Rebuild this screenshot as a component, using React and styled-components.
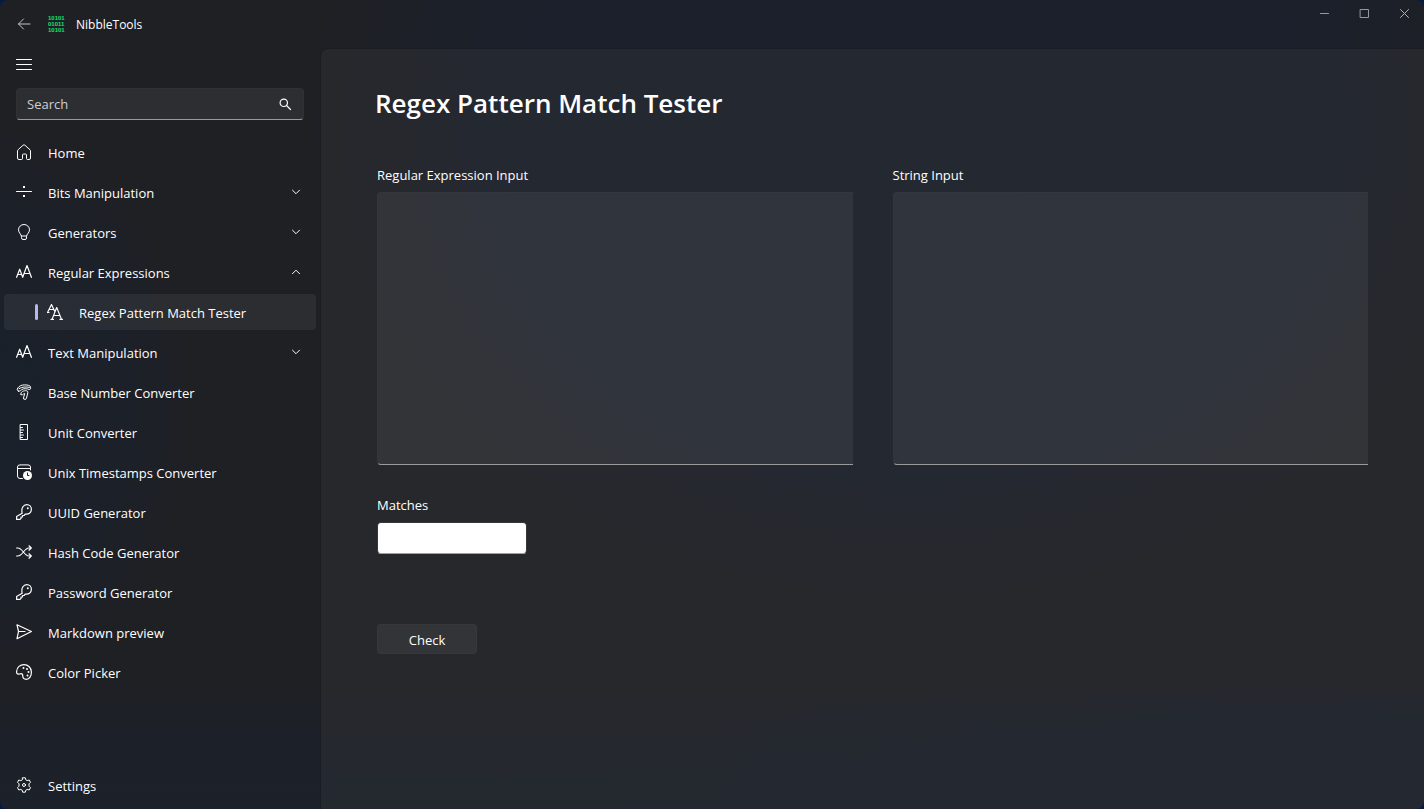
import React from "react";
import styled, { createGlobalStyle } from "styled-components";

const font = '"Open Sans", "Noto Sans", sans-serif';

const GlobalStyle = createGlobalStyle`
  *, *::before, *::after { box-sizing: border-box; }
  body {
    margin: 0;
    background: #041a44;
    color: #fff;
    font-family: ${font};
    font-size: 13px;
    line-height: 20px;
  }
  button, input, textarea { font: inherit; color: inherit; }
`;

const Window = styled.div`
  min-height: 100vh;
  display: flex;
  flex-direction: column;
  border-radius: 8px;
  overflow: hidden;
  background:
    radial-gradient(ellipse 46% 66% at 64% 16%, #1b202c 0%, #1b202c 60%, transparent 95%),
    radial-gradient(ellipse 14% 36% at 0% 50%, #1a212b 0%, #1c2029 60%, transparent 100%),
    radial-gradient(ellipse 50% 18% at 90% 100%, #1b202b 0%, #1b202b 50%, transparent 100%),
    linear-gradient(to top, #1b212a 0%, #1d2028 10%, transparent 17%),
    #1f2024;
`;

const TitleBar = styled.header`
  height: 48px;
  display: flex;
  align-items: center;
`;

const IconButton = styled.button`
  width: 48px;
  height: ${(p) => p.$height || 48}px;
  padding: 0;
  border: 0;
  background: none;
  display: flex;
  align-items: center;
  justify-content: center;
  color: ${(p) => p.$color || "#fff"};
`;

const AppName = styled.span`
  margin-left: 12px;
  padding-top: 2px;
  font-size: 12px;
`;

const WindowControls = styled.div`
  margin-left: auto;
  align-self: flex-start;
  display: flex;

  ${IconButton} {
    width: 40px;
    height: 27px;
  }
`;

const Body = styled.div`
  flex: 1;
  display: flex;
`;

const Sidebar = styled.aside`
  flex: none;
  width: 320px;
  padding-bottom: 6px;
  display: flex;
  flex-direction: column;
`;

const SearchBox = styled.label`
  height: 32px;
  margin: 8px 16px 14px;
  padding: 0 10px;
  display: flex;
  align-items: center;
  border: 1px solid #303134;
  border-bottom-color: #9a9a9b;
  border-radius: 4px;
  background: #2d2e31;
`;

const SearchInput = styled.input`
  flex: 1;
  min-width: 0;
  padding: 0;
  border: 0;
  outline: 0;
  background: none;
  &::placeholder { color: #cfcfd0; opacity: 1; }
`;

const NavList = styled.nav`
  padding: 0 4px;
  display: flex;
  flex-direction: column;
  gap: 4px;
  ${(p) => p.$bottom && "margin-top: auto;"}
`;

const NavItem = styled.button`
  height: 36px;
  padding: 0 12px 0 ${(p) => (p.$selected ? 31 : 12)}px;
  display: flex;
  align-items: center;
  border: 0;
  border-radius: 4px;
  background: ${(p) => (p.$selected ? "rgba(255, 255, 255, 0.06)" : "none")};
  text-align: left;
`;

const SelectionBar = styled.span`
  width: 3px;
  height: 16px;
  margin-right: 9px;
  border-radius: 2px;
  background: #b9b8ea;
`;

const NavLabel = styled.span`
  flex: 1;
  margin-left: 16px;
  padding-top: 2px;
`;

const Icon = styled.svg`
  flex: none;
  display: block;
  width: 16px;
  height: 16px;
  fill: none;
  stroke: currentColor;
  stroke-width: 1;
  stroke-linecap: round;
  stroke-linejoin: round;
`;

const Logo = styled.svg`
  display: block;
  width: 16px;
  height: 16px;
  overflow: visible;
  fill: #0fe070;
  font: bold 6px "Liberation Sans", sans-serif;
`;

const Panel = styled.main`
  flex: 1;
  min-width: 0;
  padding: 36px 54px;
  border: solid rgba(0, 0, 0, 0.12);
  border-width: 1px 0 0 1px;
  border-radius: 8px 0 0 0;
  background: rgba(58, 58, 62, 0.3);
  background-clip: padding-box;
`;

const Title = styled.h1`
  margin: 0;
  font-size: 26px;
  line-height: 36px;
  font-weight: 600;
`;

const Form = styled.form`
  margin: 44px 2px 0;
  display: flex;
  flex-direction: column;
  align-items: flex-start;
`;

const InputColumns = styled.div`
  align-self: stretch;
  display: grid;
  grid-template-columns: 1fr 1fr;
  gap: 40px;
  margin-bottom: 30px;
`;

const Field = styled.label`
  display: flex;
  flex-direction: column;
  gap: 7px;
`;

const TextArea = styled.textarea`
  height: 273px;
  padding: 6px 10px;
  resize: none;
  outline: 0;
  border: solid rgba(255, 255, 255, 0.01);
  border-width: 1px 0 1px 1px;
  border-bottom-color: #9a9a9b;
  border-radius: 4px 0 0 4px;
  background: rgba(255, 255, 255, 0.06);
`;

const MatchesInput = styled.input`
  width: 150px;
  height: 32px;
  padding: 0 10px;
  border: 1px solid #36373a;
  border-bottom-color: #9ba19b;
  border-radius: 4px;
  outline: 0;
  background: #fff;
  color: #111;
`;

const CheckButton = styled.button`
  width: 100px;
  height: 30px;
  margin-top: 70px;
  padding: 2px 0 0;
  border: 1px solid rgba(255, 255, 255, 0.02);
  border-radius: 4px;
  background: rgba(255, 255, 255, 0.06);
`;

const icons = {
  back: <path d="M14 8H2.500M7.500 3 2.500 8l5 5" />,
  menu: <path d="M.5 3.500h15M.5 8.500h15M.5 13.500h15" />,
  search: (
    <g strokeWidth="1.200">
      <circle cx="6.800" cy="6.800" r="3.700" />
      <path d="m9.500 9.500 4 4" />
    </g>
  ),
  home: (
    <path d="M7.200 1.100a1.200 1.200 0 0 1 1.600 0l5.200 4.700q.5.500.5 1.200V14q0 1.500-1.500 1.500h-1.500q-1 0-1-1V11q0-1-1-1h-2q-1 0-1 1v3.500q0 1-1 1H3q-1.500 0-1.500-1.500V7q0-.7.5-1.200Z" />
  ),
  divide: (
    <>
      <path d="M.5 7.500h15" />
      <path d="M7 2h2v2H7zM7 11h2v2H7z" fill="currentColor" stroke="none" />
    </>
  ),
  bulb: (
    <path d="M5.500 12.500C5.400 10 2.500 9 2.500 5.800a5.500 5.300 0 0 1 11 0c0 3.200-2.900 4.200-3 6.700v1.500q0 1.500-1.500 1.500H7q-1.500 0-1.500-1.500ZM5.500 12h5" />
  ),
  letters: (
    <path
      strokeWidth="1.200"
      d="M.6 13.300 3.700 5.200l3 8.100M1.700 10.500h4M6.700 13.300 11 1.500l4.400 11.800M8 9.500h6"
    />
  ),
  lettersOverlap: (
    <path
      strokeWidth="1.200"
      d="M.5 8.500 4.500.6l3 6.400M2 5.500h4M0 8.500h2M5 15.400 9.700 3.500l4.800 11.900M6.700 11.500h6M4 15.400h2.500M13 15.400h2.500"
    />
  ),
  base: (
    <path d="M2.500 7.200C1 6.600.8 5.300 1.800 4 3.200 2 5.500.9 8.500.9c3.300 0 5.700.6 6 1.900.3 1.500 0 2.900-1 2.700-3-.9-6-1.300-8 .3-1 .8-1.800 1.800-3 1.400ZM3 4.700C6 2.800 10 2.500 13.500 3.400M5 10.500C4.300 8.500 6.500 6.700 9.500 6.700c1.700 0 2.500.6 2.300 2l-1.300 5.500q-.3 1.200-1.500 1.200-2 0-1.500-1.500L8.700 9.500C7 9.500 6.500 12 5 10.500Z" />
  ),
  ruler: (
    <path d="M4.500.5h7v15h-7ZM4.500 3.500h2M4.500 6h3M4.500 8.500h2M4.500 11h3M4.500 13.500h2" />
  ),
  timestamp: (
    <>
      <path d="M6.500 14.500H4q-2.500 0-2.500-2.500V3Q1.500.9 4 .9h8q2.500 0 2.500 2.100v3M1.500 4.500h13" />
      <circle cx="11.500" cy="11.500" r="4.500" fill="currentColor" stroke="none" />
      <path d="M11.500 9v2.500H13" stroke="#1d2026" />
    </>
  ),
  key: (
    <>
      <path
        strokeWidth="1.200"
        d="M6.200 9.300C4.900 4.200 7.500.6 10.800.6a4.700 4.700 0 0 1 4.600 4.700c0 3.500-2.900 5.200-5.900 4.700L8 11.500H6.500V13H5v1.500l-1 .9H.6v-2.900Z"
      />
      <circle cx="11.800" cy="4.200" r="1" fill="currentColor" stroke="none" />
    </>
  ),
  shuffle: (
    <path
      strokeWidth="1.200"
      d="M.6 4h1.200c5 0 6.200 8 11.200 8h2.300M.6 12h1.200C6.800 12 8 4 13 4h2.300M13 1.800 15.300 4 13 6.200M13 9.800l2.300 2.200-2.300 2.200"
    />
  ),
  send: <path strokeWidth="1.200" d="M1 .8 15.400 7.500 1 14.700l1.500-7.200ZM2.500 7.500H9" />,
  palette: (
    <>
      <path
        strokeWidth="1.200"
        d="M.6 7.500C.8 3 4.300.6 8 .6a7.400 7.400 0 0 1 7.400 7.400c0 4-1.900 7.400-5.100 7.400-2.600 0-3.500-1.500-3.500-3.200 0-1.500-.5-2.500-1.800-2.500-1 0-1.600.5-2.600.5C1 10.200.5 9 .6 7.500Z"
      />
      <g fill="currentColor" stroke="none">
        <circle cx="7.500" cy="4" r="1" />
        <circle cx="11" cy="5" r="1" />
        <circle cx="12.500" cy="8" r="1" />
        <circle cx="11.500" cy="11.500" r="1" />
      </g>
    </>
  ),
  settings: (
    <>
      <path d="M6.700.8h2.600l.5 2 1.400.8 2-.6 1.300 2.300L13 6.800v2.400l1.500 1.500-1.300 2.300-2-.6-1.400.8-.5 2H6.700l-.5-2-1.400-.8-2 .6-1.300-2.300L3 9.200V6.800L1.500 5.300 2.800 3l2 .6 1.400-.8Z" />
      <circle cx="8" cy="8" r="1.500" />
    </>
  ),
  chevronDown: <path d="m4.500 6.200 3.500 3.500 3.500-3.500" />,
  chevronUp: <path d="m4.500 9.700 3.500-3.500 3.500 3.500" />,
  minimize: <path d="M4.500 7.500h8" />,
  maximize: <path d="M4.500 3.500h8v8h-8Z" />,
  close: <path d="m4.500 3.500 8 8M12.500 3.500l-8 8" />,
};

const Glyph = ({ name }) => (
  <Icon viewBox="0 0 16 16" aria-hidden="true">
    {icons[name]}
  </Icon>
);

const navItems = [
  { icon: "home", label: "Home" },
  { icon: "divide", label: "Bits Manipulation", chevron: "chevronDown" },
  { icon: "bulb", label: "Generators", chevron: "chevronDown" },
  { icon: "letters", label: "Regular Expressions", chevron: "chevronUp" },
  { icon: "lettersOverlap", label: "Regex Pattern Match Tester", selected: true },
  { icon: "letters", label: "Text Manipulation", chevron: "chevronDown" },
  { icon: "base", label: "Base Number Converter" },
  { icon: "ruler", label: "Unit Converter" },
  { icon: "timestamp", label: "Unix Timestamps Converter" },
  { icon: "key", label: "UUID Generator" },
  { icon: "shuffle", label: "Hash Code Generator" },
  { icon: "key", label: "Password Generator" },
  { icon: "send", label: "Markdown preview" },
  { icon: "palette", label: "Color Picker" },
];

const NavEntry = ({ icon, label, chevron, selected }) => (
  <NavItem type="button" $selected={selected} aria-current={selected ? "page" : undefined}>
    {selected && <SelectionBar />}
    <Glyph name={icon} />
    <NavLabel>{label}</NavLabel>
    {chevron && <Glyph name={chevron} />}
  </NavItem>
);

export default function App() {
  return (
    <>
      <GlobalStyle />
      <Window>
        <TitleBar>
          <IconButton type="button" aria-label="Back" $color="#c4c4c5">
            <Glyph name="back" />
          </IconButton>
          <Logo viewBox="0 0 16 16" aria-hidden="true">
            <text x="0" y="4">10101</text>
            <text x="0" y="10">01011</text>
            <text x="0" y="16">10101</text>
          </Logo>
          <AppName>NibbleTools</AppName>
          <WindowControls>
            <IconButton type="button" aria-label="Minimize" $color="#96989c">
              <Glyph name="minimize" />
            </IconButton>
            <IconButton type="button" aria-label="Maximize" $color="#96989c">
              <Glyph name="maximize" />
            </IconButton>
            <IconButton type="button" aria-label="Close" $color="#b0b1b4">
              <Glyph name="close" />
            </IconButton>
          </WindowControls>
        </TitleBar>
        <Body>
          <Sidebar>
            <IconButton type="button" aria-label="Menu" $height={32}>
              <Glyph name="menu" />
            </IconButton>
            <SearchBox>
              <SearchInput type="text" placeholder="Search" aria-label="Search" />
              <Glyph name="search" />
            </SearchBox>
            <NavList>
              {navItems.map((item) => (
                <NavEntry key={item.label} {...item} />
              ))}
            </NavList>
            <NavList $bottom>
              <NavEntry icon="settings" label="Settings" />
            </NavList>
          </Sidebar>
          <Panel>
            <Title>Regex Pattern Match Tester</Title>
            <Form onSubmit={(e) => e.preventDefault()}>
              <InputColumns>
                <Field>
                  Regular Expression Input
                  <TextArea />
                </Field>
                <Field>
                  String Input
                  <TextArea />
                </Field>
              </InputColumns>
              <Field>
                Matches
                <MatchesInput type="text" readOnly />
              </Field>
              <CheckButton type="submit">Check</CheckButton>
            </Form>
          </Panel>
        </Body>
      </Window>
    </>
  );
}
